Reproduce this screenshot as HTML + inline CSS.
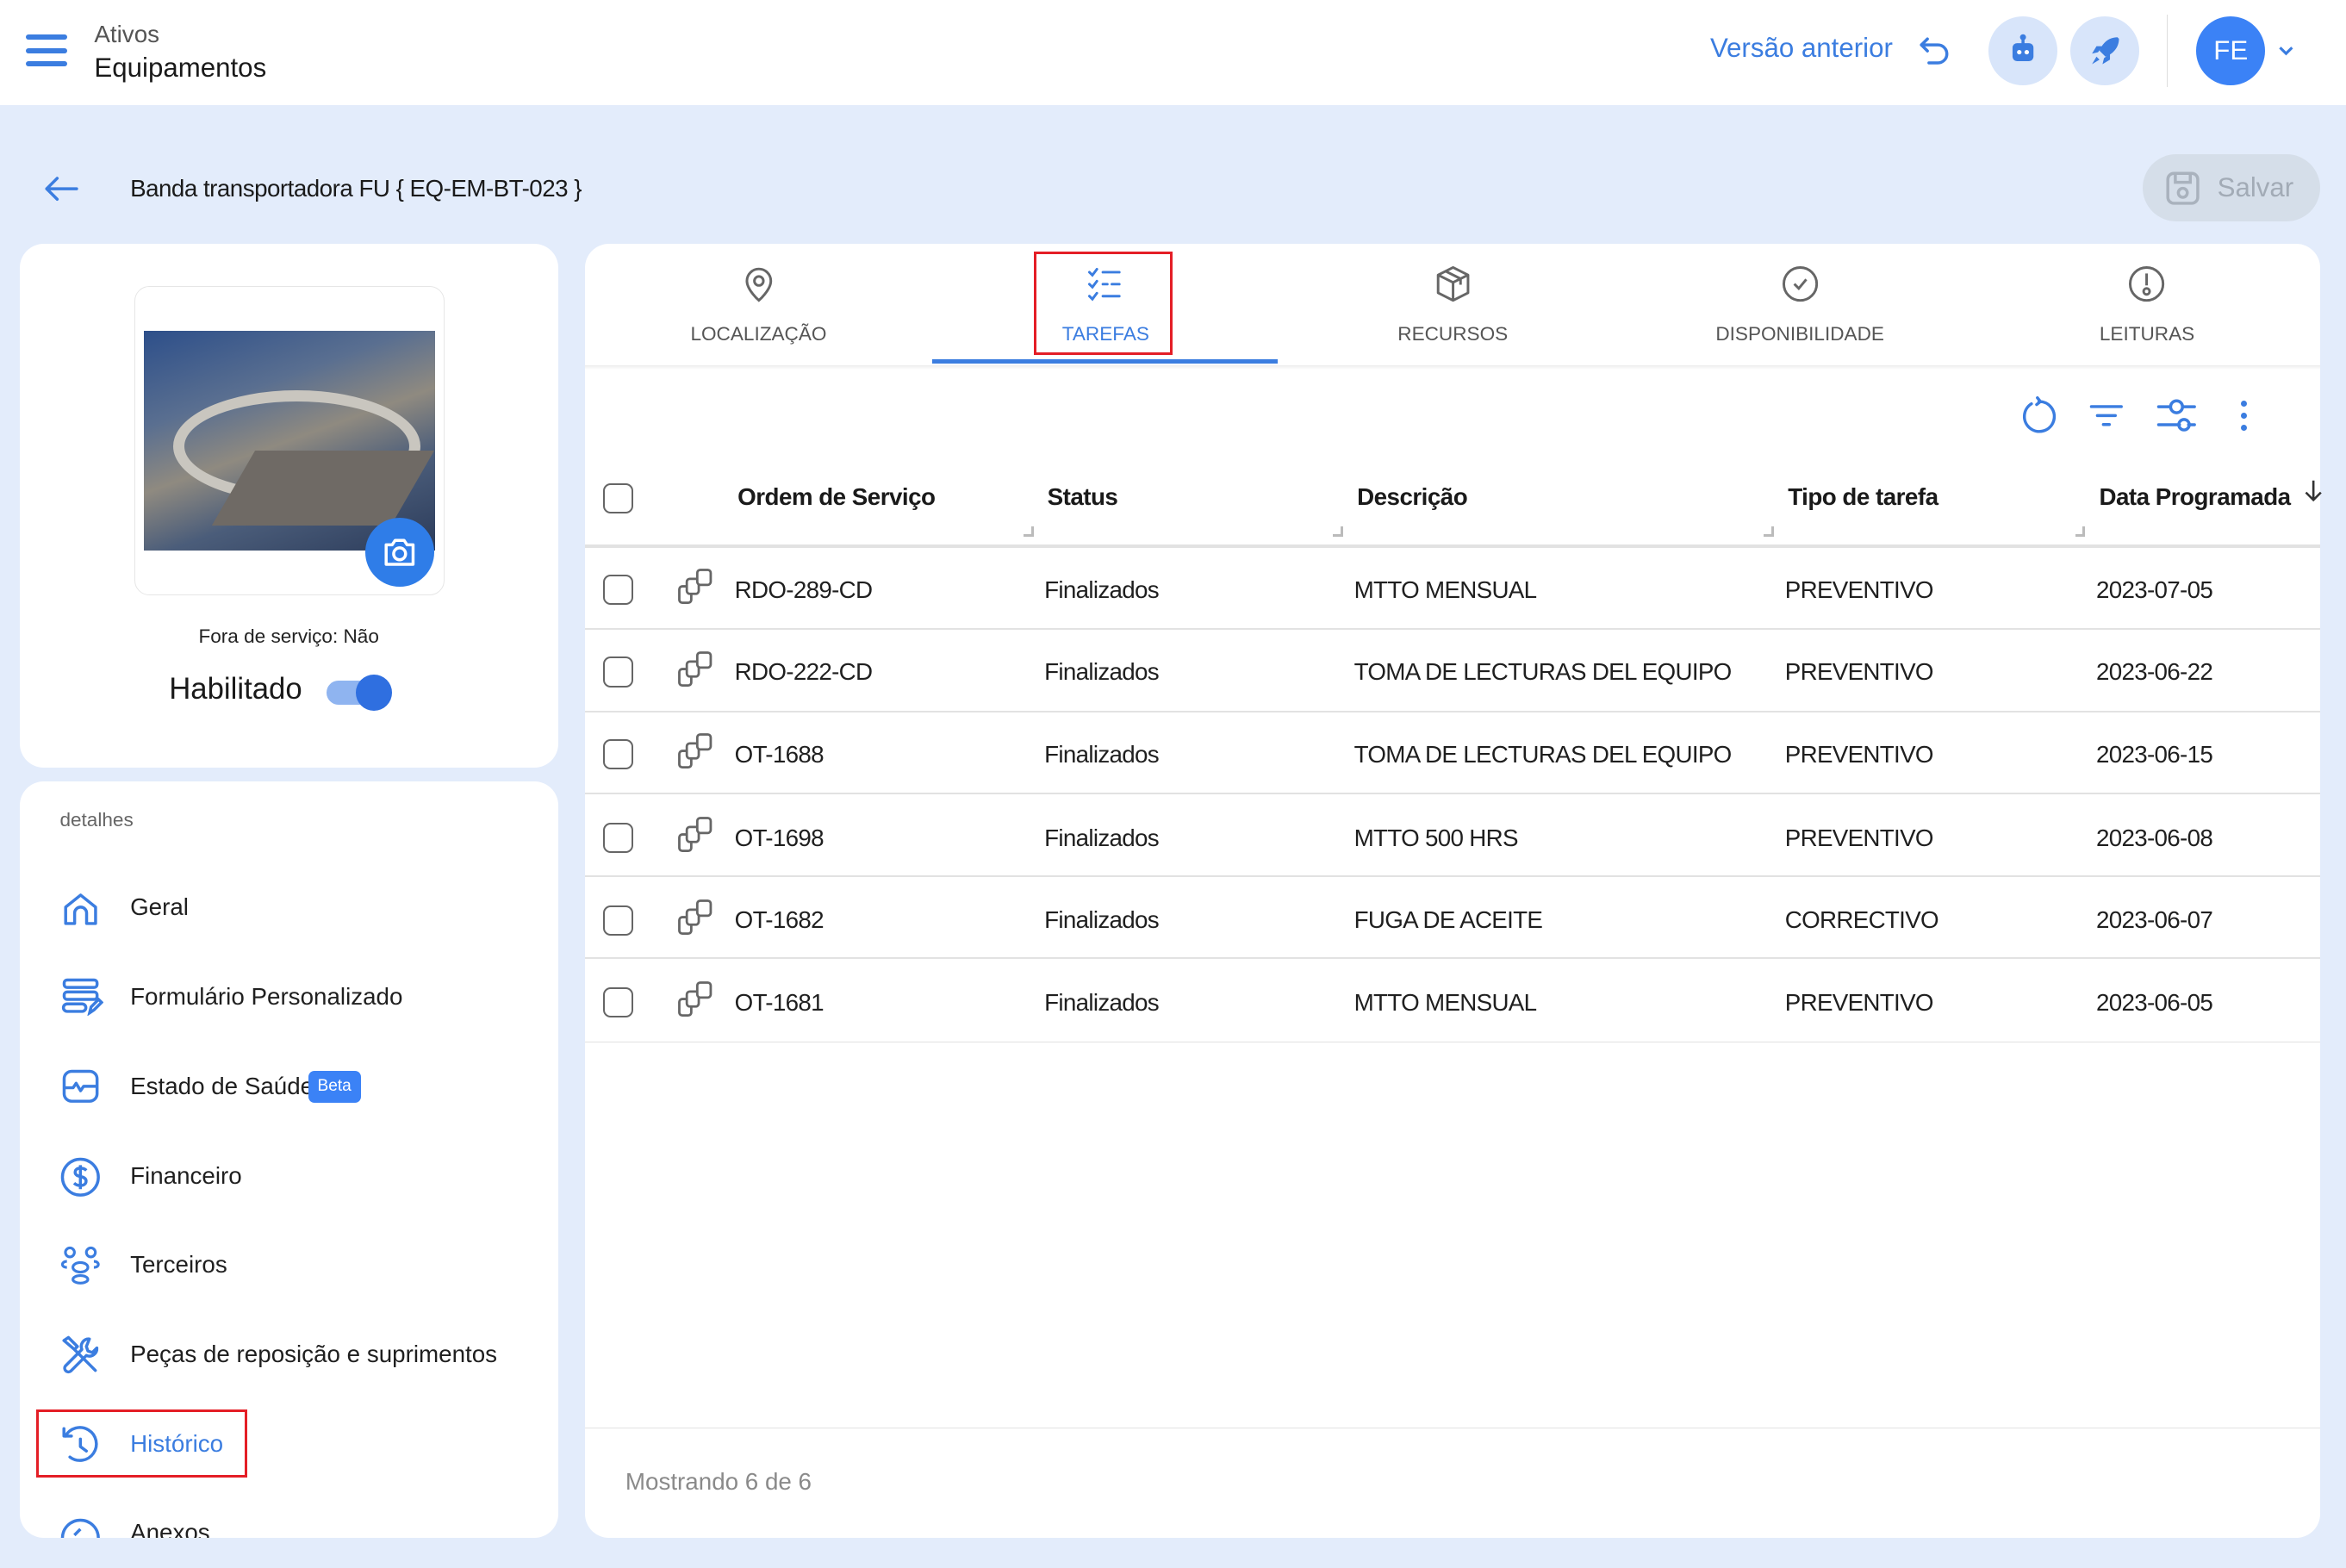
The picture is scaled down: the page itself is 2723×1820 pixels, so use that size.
<!DOCTYPE html>
<html><head><meta charset="utf-8">
<style>
html,body{margin:0;padding:0;}
body{width:2723px;height:1819px;overflow:hidden;background:#e3ecfb;font-family:"Liberation Sans",Arial,sans-serif;}
#r{position:absolute;left:0;top:0;width:1568px;height:1048px;zoom:1.73661;background:#e3ecfb;overflow:hidden;}
.a{position:absolute;white-space:nowrap;}
.card{position:absolute;background:#fff;border-radius:16px;}
.t{font-size:16px;color:#1f1f1f;letter-spacing:-0.4px;}
.ic{position:absolute;}
.hd{font-weight:bold;font-size:16px;color:#1a1a1a;letter-spacing:-0.3px;}
.line{position:absolute;left:391px;width:1160px;height:1px;background:#e2e2e2;}
.cb{position:absolute;left:403px;width:18px;height:18px;border:1.5px solid #666;border-radius:5px;}
.tab{position:absolute;top:216px;width:232px;text-align:center;font-size:13px;color:#555;}
.nav{position:absolute;left:87px;font-size:16px;color:#1f1f1f;}
</style></head><body><div id="r">
<div style="position:absolute;left:0;top:0;width:1568px;height:70px;background:#fff;"></div>
<div class="a" style="left:17px;top:23px;width:28px;height:3.5px;background:#3b7de0;border-radius:2px"></div>
<div class="a" style="left:17px;top:32px;width:28px;height:3.5px;background:#3b7de0;border-radius:2px"></div>
<div class="a" style="left:17px;top:41px;width:28px;height:3.5px;background:#3b7de0;border-radius:2px"></div>
<div class="a" style="left:63px;top:14px;font-size:16px;color:#555">Ativos</div>
<div class="a" style="left:63px;top:35px;font-size:18px;color:#1a1a1a">Equipamentos</div>
<div class="a" style="left:1143px;top:22px;font-size:18px;color:#3b7de0">Versão anterior</div>
<svg class="ic" style="left:1281px;top:23px" width="24" height="22" viewBox="0 0 24 22" fill="none" stroke="#3b7de0" stroke-width="2" stroke-linecap="round" stroke-linejoin="round"><path d="M7 3L3 7l4 4"/><path d="M3 7h11a6 6 0 0 1 0 12H8"/></svg>
<div class="a" style="left:1329px;top:11px;width:46px;height:46px;border-radius:50%;background:#d8e5fa"></div>
<svg class="ic" style="left:1341px;top:22px" width="22" height="24" viewBox="0 0 22 24"><rect x="4" y="7" width="14" height="12" rx="3" fill="#3b7de0"/><circle cx="11" cy="3" r="2" fill="#3b7de0"/><rect x="10" y="3" width="2" height="5" fill="#3b7de0"/><circle cx="8.5" cy="13" r="1.5" fill="#fff"/><circle cx="13.5" cy="13" r="1.5" fill="#fff"/></svg>
<div class="a" style="left:1384px;top:11px;width:46px;height:46px;border-radius:50%;background:#d8e5fa"></div>
<svg class="ic" style="left:1395px;top:22px" width="24" height="24" viewBox="0 0 24 24"><path d="M20 3c-6 0-10 4-12 9l4 4c5-2 9-6 9-12z" fill="#3b7de0"/><path d="M7 13l-4 1 3-5h4zM11 17l-1 4 5-3v-4z" fill="#3b7de0"/><path d="M6 16l-3 5 5-3z" fill="#3b7de0"/></svg>
<div class="a" style="left:1448px;top:10px;width:1px;height:48px;background:#ddd"></div>
<div class="a" style="left:1468px;top:11px;width:46px;height:46px;border-radius:50%;background:#3b82f6;color:#fff;font-size:18px;text-align:center;line-height:46px">FE</div>
<svg class="ic" style="left:1522px;top:29px" width="12" height="10" viewBox="0 0 12 10" fill="none" stroke="#3b7de0" stroke-width="1.8"><path d="M2 3l4 4 4-4"/></svg>
<svg class="ic" style="left:28px;top:115px" width="26" height="22" viewBox="0 0 26 22" fill="none" stroke="#3b7de0" stroke-width="2" stroke-linecap="round" stroke-linejoin="round"><path d="M23 11H3M10 4l-7 7 7 7"/></svg>
<div class="a" style="left:87px;top:117px;font-size:16px;color:#1a1a1a;letter-spacing:-0.3px">Banda transportadora FU { EQ-EM-BT-023 }</div>
<div class="a" style="left:1432px;top:103px;width:119px;height:45px;border-radius:23px;background:#d5dee9"></div>
<svg class="ic" style="left:1446px;top:113px" width="26" height="26" viewBox="0 0 26 26" fill="none" stroke="#a9b2bd" stroke-width="2"><rect x="3" y="3" width="20" height="20" rx="4"/><rect x="8" y="3" width="10" height="6"/><circle cx="13" cy="16" r="3"/></svg>
<div class="a" style="left:1482px;top:115px;font-size:18px;color:#a2abb6">Salvar</div>
<div class="card" style="left:13px;top:163px;width:360px;height:350px"></div>
<div class="a" style="left:90px;top:191px;width:206px;height:206px;border:1px solid #e6e6e6;border-radius:10px;background:#fff"></div>
<div class="a" style="left:96px;top:221px;width:195px;height:147px;background:linear-gradient(160deg,#2d4f8a 0%,#5a6f90 30%,#8f8a80 50%,#4b5d7a 70%,#2b3b5a 100%);overflow:hidden">
<div style="position:absolute;left:20px;top:40px;width:150px;height:60px;border:8px solid #c9c6bf;border-radius:50%;"></div>
<div style="position:absolute;left:60px;top:80px;width:120px;height:50px;background:#6f6a65;transform:skewX(-30deg)"></div>
</div>
<div class="a" style="left:244px;top:346px;width:46px;height:46px;border-radius:50%;background:#2f7de8"></div>
<svg class="ic" style="left:255px;top:358px" width="24" height="22" viewBox="0 0 24 22" fill="none" stroke="#fff" stroke-width="2"><path d="M3 6h4l2-3h6l2 3h4v13H3z" stroke-linejoin="round"/><circle cx="12" cy="12" r="4"/></svg>
<div class="a" style="left:0;width:386px;top:418px;text-align:center;font-size:13px;color:#222">Fora de serviço: Não</div>
<div class="a" style="left:113px;top:450px;font-size:20px;color:#1a1a1a">Habilitado</div>
<div class="a" style="left:218px;top:455px;width:40px;height:16px;border-radius:8px;background:#8fb4f0"></div>
<div class="a" style="left:238px;top:451px;width:24px;height:24px;border-radius:50%;background:#2f6fe0"></div>
<div class="card" style="left:13px;top:522px;width:360px;height:506px;overflow:hidden">
<div class="a" style="left:27px;top:19px;font-size:13px;color:#666">detalhes</div>
</div>
<svg class="ic" style="left:41px;top:594px" width="26" height="26" viewBox="0 0 26 26" fill="none" stroke="#3b7de0" stroke-width="2" stroke-linejoin="round"><path d="M3 23V12L13 4l10 8v11h-6v-7a4 4 0 0 0-8 0v7z"/></svg>
<div class="nav" style="top:597px">Geral</div>
<svg class="ic" style="left:41px;top:653px" width="28" height="26" viewBox="0 0 28 26" fill="none" stroke="#3b7de0" stroke-width="2"><rect x="2" y="2" width="22" height="5" rx="2"/><rect x="2" y="10" width="22" height="5" rx="2"/><path d="M4 18h10a2 2 0 0 1 0 5H4a2 2 0 0 1 0-5z"/><path d="M19 24l1-4 5-5 2 2-5 5z"/></svg>
<div class="nav" style="top:657px">Formulário Personalizado</div>
<svg class="ic" style="left:41px;top:714px" width="26" height="24" viewBox="0 0 26 24" fill="none" stroke="#3b7de0" stroke-width="2" stroke-linejoin="round"><rect x="2" y="2" width="22" height="20" rx="5"/><path d="M2 13h6l2-3 3 5 2-3h9"/></svg>
<div class="nav" style="top:717px">Estado de Saúde</div>
<div class="a" style="left:206px;top:716px;width:35px;height:21px;border-radius:4px;background:#3b82f6;color:#fff;font-size:11px;text-align:center;line-height:21px">Beta</div>
<svg class="ic" style="left:40px;top:773px" width="28" height="28" viewBox="0 0 28 28" fill="none" stroke="#3b7de0" stroke-width="2"><circle cx="14" cy="14" r="12"/><path d="M18 9.5c-1-1-2.5-1.5-4-1.5-2 0-3.5 1-3.5 2.8s1.5 2.4 3.5 2.8 3.8 1 3.8 3-1.7 3-3.8 3c-1.7 0-3.2-.6-4.2-1.6M14 6v16"/></svg>
<div class="nav" style="top:777px">Financeiro</div>
<svg class="ic" style="left:40px;top:832px" width="28" height="28" viewBox="0 0 28 28" fill="none" stroke="#3b7de0" stroke-width="1.8"><circle cx="7" cy="5" r="3"/><circle cx="21" cy="5" r="3"/><ellipse cx="14" cy="15" rx="5" ry="3.2"/><ellipse cx="14" cy="23" rx="5" ry="2.5"/><path d="M5 11c-2 0-3 1-3 2s1 2 3 2M23 11c2 0 3 1 3 2s-1 2-3 2"/></svg>
<div class="nav" style="top:836px">Terceiros</div>
<svg class="ic" style="left:40px;top:892px" width="28" height="28" viewBox="0 0 28 28" fill="none" stroke="#3b7de0" stroke-width="2" stroke-linecap="round" stroke-linejoin="round"><path d="M3 4l3-2 6 6-2 2zM10 10l14 14M20 3a5 5 0 0 0-5 7L4 21a2.5 2.5 0 0 0 3.5 3.5L18 14a5 5 0 0 0 7-5l-3 3-3-1-1-3z"/></svg>
<div class="nav" style="top:896px">Peças de reposição e suprimentos</div>
<svg class="ic" style="left:40px;top:952px" width="28" height="28" viewBox="0 0 28 28" fill="none" stroke="#3b7de0" stroke-width="2" stroke-linecap="round" stroke-linejoin="round"><path d="M4 8a11 11 0 1 1 3 14"/><path d="M3 3v5h5"/><path d="M14 10v5l4 3"/></svg>
<div class="nav" style="top:956px;color:#3b7de0">Histórico</div>
<div class="a" style="left:24px;top:942px;width:138px;height:42px;border:2px solid #e41e26"></div>
<svg class="ic" style="left:40px;top:1014px" width="28" height="14" viewBox="0 0 28 14" fill="none" stroke="#3b7de0" stroke-width="2"><path d="M2 14a12 12 0 0 1 24 0M10 12l4-4"/></svg>
<div class="nav" style="top:1015px">Anexos</div>
<div class="a" style="left:0;top:1028px;width:1568px;height:20px;background:#e3ecfb"></div>
<div class="card" style="left:391px;top:163px;width:1160px;height:865px"></div>
<div class="a" style="left:391px;top:244px;width:1160px;height:3px;background:linear-gradient(#ececec,#fff)"></div>
<svg class="ic" style="left:495px;top:177px" width="24" height="26" viewBox="0 0 24 26" fill="none" stroke="#666" stroke-width="1.7"><path d="M12 24s8-7 8-13a8 8 0 0 0-16 0c0 6 8 13 8 13z"/><circle cx="12" cy="11" r="3"/></svg>
<svg class="ic" style="left:726px;top:178px" width="26" height="26" viewBox="0 0 26 26" fill="none" stroke="#3b7de0" stroke-width="1.7" stroke-linecap="round"><path d="M2 4l2 2 3-4M2 12l2 2 3-4M2 20l2 2 3-4M11 4h11M11 12h3M17 12h5M11 20h11"/></svg>
<svg class="ic" style="left:958px;top:177px" width="26" height="26" viewBox="0 0 26 26" fill="none" stroke="#666" stroke-width="1.7" stroke-linejoin="round"><path d="M13 2l10 5v12l-10 5-10-5V7zM3 7l10 5 10-5M13 12v12M8 4.5l10 5v4"/></svg>
<svg class="ic" style="left:1190px;top:177px" width="26" height="26" viewBox="0 0 26 26" fill="none" stroke="#666" stroke-width="1.7"><circle cx="13" cy="13" r="11"/><path d="M9 13l3 3 5-6"/></svg>
<svg class="ic" style="left:1422px;top:177px" width="26" height="26" viewBox="0 0 26 26" fill="none" stroke="#666" stroke-width="1.7"><circle cx="13" cy="13" r="11"/><path d="M13 6v8"/><circle cx="13" cy="18" r="2"/></svg>
<div class="tab" style="left:391px">LOCALIZAÇÃO</div>
<div class="tab" style="left:623px;color:#3b7de0">TAREFAS</div>
<div class="tab" style="left:855px">RECURSOS</div>
<div class="tab" style="left:1087px">DISPONIBILIDADE</div>
<div class="tab" style="left:1319px">LEITURAS</div>
<div class="a" style="left:623px;top:240px;width:231px;height:3px;background:#3b7de0"></div>
<div class="a" style="left:691px;top:168px;width:89px;height:66px;border:2px solid #e41e26"></div>
<svg class="ic" style="left:1350px;top:265px" width="26" height="26" viewBox="0 0 26 26" fill="none" stroke="#3b7de0" stroke-width="2" stroke-linecap="round"><path d="M8 5a10 10 0 1 0 5-1.5"/><path d="M12 1l2 2.5-2.5 2"/></svg>
<svg class="ic" style="left:1396px;top:268px" width="24" height="20" viewBox="0 0 24 20" fill="none" stroke="#3b7de0" stroke-width="2" stroke-linecap="round"><path d="M2 4h20M6 10h12M10 16h4"/></svg>
<svg class="ic" style="left:1441px;top:265px" width="28" height="26" viewBox="0 0 28 26" fill="none" stroke="#3b7de0" stroke-width="2" stroke-linecap="round"><path d="M2 7h8M18 7h8M2 19h14M22 19h4"/><circle cx="14" cy="7" r="4"/><circle cx="19" cy="19" r="3.5"/></svg>
<div class="a" style="left:1498px;top:268px;width:4px;height:4px;border-radius:50%;background:#3b7de0"></div>
<div class="a" style="left:1498px;top:276px;width:4px;height:4px;border-radius:50%;background:#3b7de0"></div>
<div class="a" style="left:1498px;top:284px;width:4px;height:4px;border-radius:50%;background:#3b7de0"></div>
<div class="cb" style="top:323px"></div>
<div class="a hd" style="left:493px;top:323px">Ordem de Serviço</div>
<div class="a hd" style="left:700px;top:323px">Status</div>
<div class="a hd" style="left:907px;top:323px">Descrição</div>
<div class="a hd" style="left:1195px;top:323px">Tipo de tarefa</div>
<div class="a hd" style="left:1403px;top:323px">Data Programada</div>
<svg class="ic" style="left:1539px;top:320px" width="14" height="16" viewBox="0 0 14 16" fill="none" stroke="#333" stroke-width="1.5"><path d="M7 1v13M2 9l5 5 5-5"/></svg>
<div class="a" style="left:684px;top:352px;width:5px;height:5px;border-right:2px solid #bbb;border-bottom:2px solid #bbb"></div>
<div class="a" style="left:891px;top:352px;width:5px;height:5px;border-right:2px solid #bbb;border-bottom:2px solid #bbb"></div>
<div class="a" style="left:1179px;top:352px;width:5px;height:5px;border-right:2px solid #bbb;border-bottom:2px solid #bbb"></div>
<div class="a" style="left:1387px;top:352px;width:5px;height:5px;border-right:2px solid #bbb;border-bottom:2px solid #bbb"></div>
<div class="line" style="top:364px;height:2px"></div>
<div class="cb" style="top:384px"></div><svg class="ic" style="left:452px;top:379px" width="26" height="26" viewBox="0 0 26 26" fill="none" stroke="#666" stroke-width="1.6"><rect x="2" y="13" width="8" height="11" rx="2"/><rect x="7" y="8" width="8" height="10" rx="2" fill="#fff"/><rect x="14" y="2" width="9" height="10" rx="2" fill="#fff"/></svg>
<div class="a t" style="left:491px;top:385px">RDO-289-CD</div><div class="a t" style="left:698px;top:385px">Finalizados</div><div class="a t" style="left:905px;top:385px">MTTO MENSUAL</div><div class="a t" style="left:1193px;top:385px">PREVENTIVO</div><div class="a t" style="left:1401px;top:385px">2023-07-05</div>
<div class="line" style="top:420px"></div>
<div class="cb" style="top:439px"></div><svg class="ic" style="left:452px;top:434px" width="26" height="26" viewBox="0 0 26 26" fill="none" stroke="#666" stroke-width="1.6"><rect x="2" y="13" width="8" height="11" rx="2"/><rect x="7" y="8" width="8" height="10" rx="2" fill="#fff"/><rect x="14" y="2" width="9" height="10" rx="2" fill="#fff"/></svg>
<div class="a t" style="left:491px;top:440px">RDO-222-CD</div><div class="a t" style="left:698px;top:440px">Finalizados</div><div class="a t" style="left:905px;top:440px">TOMA DE LECTURAS DEL EQUIPO</div><div class="a t" style="left:1193px;top:440px">PREVENTIVO</div><div class="a t" style="left:1401px;top:440px">2023-06-22</div>
<div class="line" style="top:475px"></div>
<div class="cb" style="top:494px"></div><svg class="ic" style="left:452px;top:489px" width="26" height="26" viewBox="0 0 26 26" fill="none" stroke="#666" stroke-width="1.6"><rect x="2" y="13" width="8" height="11" rx="2"/><rect x="7" y="8" width="8" height="10" rx="2" fill="#fff"/><rect x="14" y="2" width="9" height="10" rx="2" fill="#fff"/></svg>
<div class="a t" style="left:491px;top:495px">OT-1688</div><div class="a t" style="left:698px;top:495px">Finalizados</div><div class="a t" style="left:905px;top:495px">TOMA DE LECTURAS DEL EQUIPO</div><div class="a t" style="left:1193px;top:495px">PREVENTIVO</div><div class="a t" style="left:1401px;top:495px">2023-06-15</div>
<div class="line" style="top:530px"></div>
<div class="cb" style="top:550px"></div><svg class="ic" style="left:452px;top:545px" width="26" height="26" viewBox="0 0 26 26" fill="none" stroke="#666" stroke-width="1.6"><rect x="2" y="13" width="8" height="11" rx="2"/><rect x="7" y="8" width="8" height="10" rx="2" fill="#fff"/><rect x="14" y="2" width="9" height="10" rx="2" fill="#fff"/></svg>
<div class="a t" style="left:491px;top:551px">OT-1698</div><div class="a t" style="left:698px;top:551px">Finalizados</div><div class="a t" style="left:905px;top:551px">MTTO 500 HRS</div><div class="a t" style="left:1193px;top:551px">PREVENTIVO</div><div class="a t" style="left:1401px;top:551px">2023-06-08</div>
<div class="line" style="top:585px"></div>
<div class="cb" style="top:605px"></div><svg class="ic" style="left:452px;top:600px" width="26" height="26" viewBox="0 0 26 26" fill="none" stroke="#666" stroke-width="1.6"><rect x="2" y="13" width="8" height="11" rx="2"/><rect x="7" y="8" width="8" height="10" rx="2" fill="#fff"/><rect x="14" y="2" width="9" height="10" rx="2" fill="#fff"/></svg>
<div class="a t" style="left:491px;top:606px">OT-1682</div><div class="a t" style="left:698px;top:606px">Finalizados</div><div class="a t" style="left:905px;top:606px">FUGA DE ACEITE</div><div class="a t" style="left:1193px;top:606px">CORRECTIVO</div><div class="a t" style="left:1401px;top:606px">2023-06-07</div>
<div class="line" style="top:640px"></div>
<div class="cb" style="top:660px"></div><svg class="ic" style="left:452px;top:655px" width="26" height="26" viewBox="0 0 26 26" fill="none" stroke="#666" stroke-width="1.6"><rect x="2" y="13" width="8" height="11" rx="2"/><rect x="7" y="8" width="8" height="10" rx="2" fill="#fff"/><rect x="14" y="2" width="9" height="10" rx="2" fill="#fff"/></svg>
<div class="a t" style="left:491px;top:661px">OT-1681</div><div class="a t" style="left:698px;top:661px">Finalizados</div><div class="a t" style="left:905px;top:661px">MTTO MENSUAL</div><div class="a t" style="left:1193px;top:661px">PREVENTIVO</div><div class="a t" style="left:1401px;top:661px">2023-06-05</div>
<div class="line" style="top:696px"></div>
<div class="line" style="top:954px"></div>
<div class="a" style="left:418px;top:981px;font-size:16px;color:#8a8a8a">Mostrando 6 de 6</div>
</div></body></html>
